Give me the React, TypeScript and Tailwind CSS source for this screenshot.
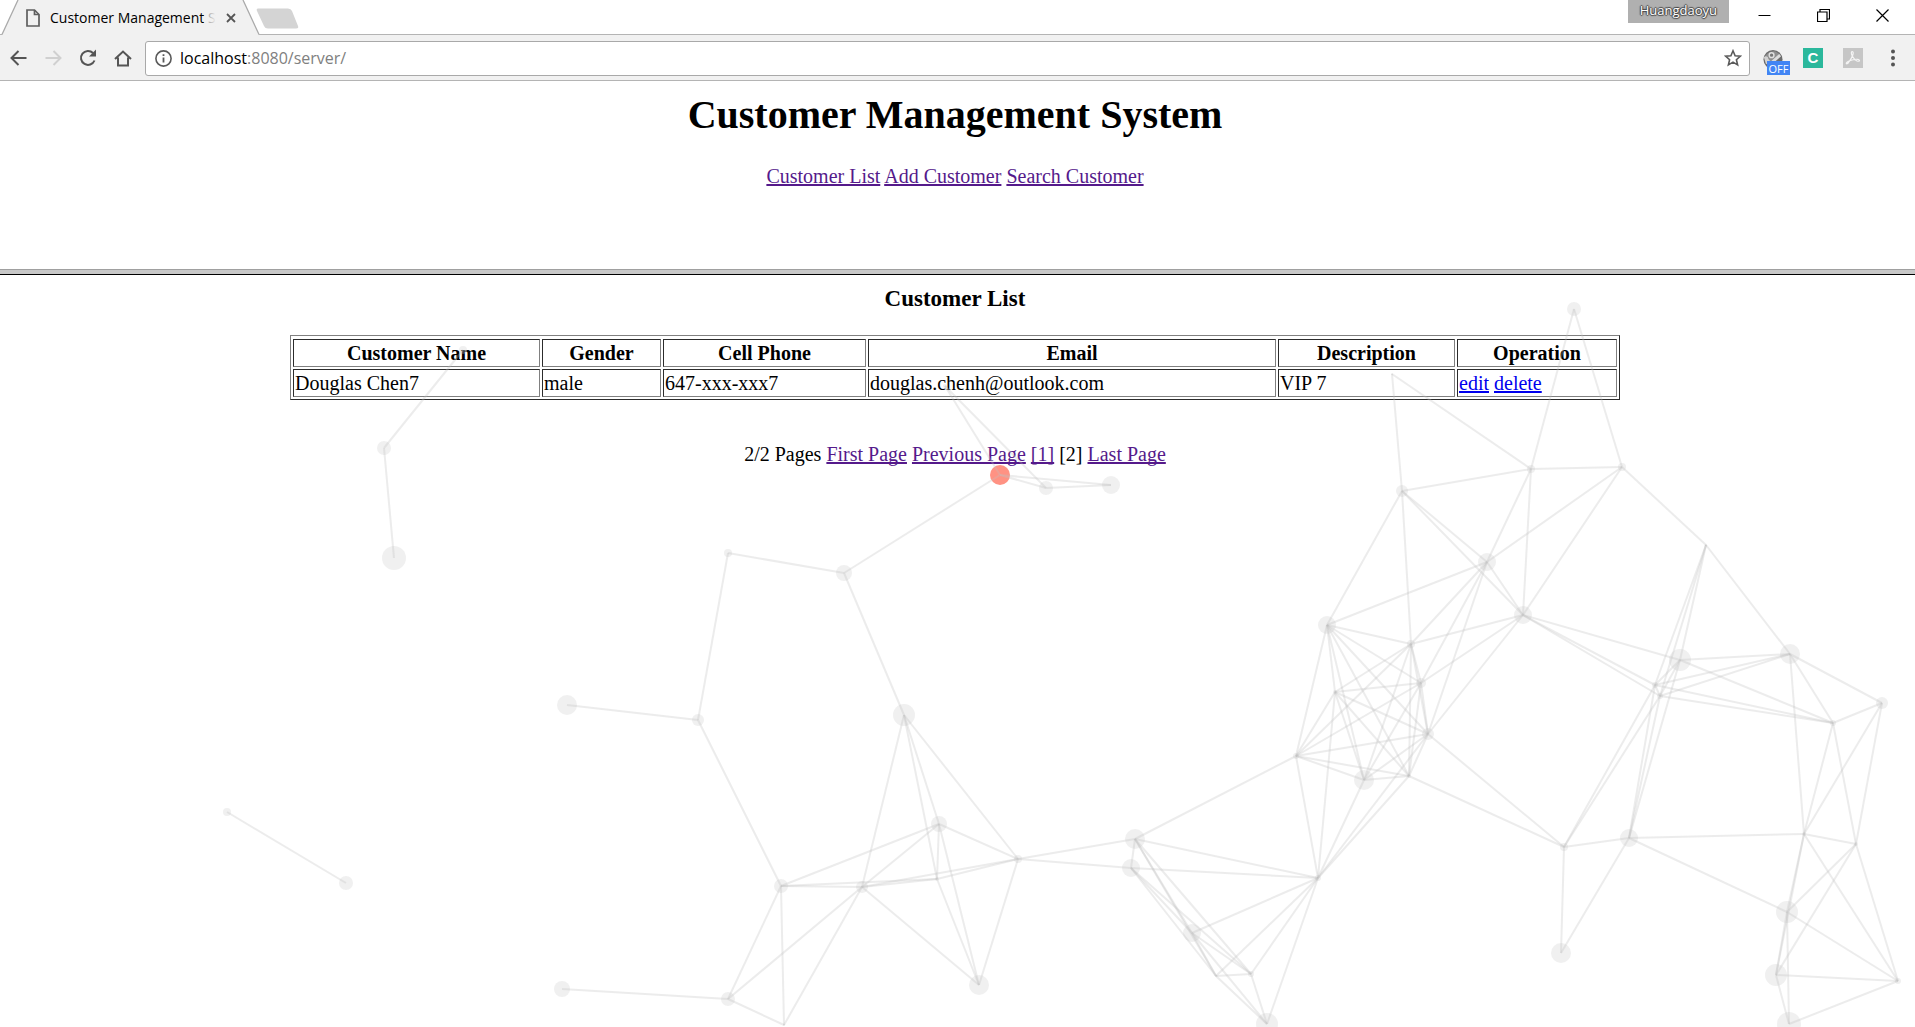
import React from "react";

type Node = [x: number, y: number, r: number];

const nodes: Record<string, Node> = {
  a1: [463, 350, 4], a2: [384, 448, 7], a3: [394, 558, 12],
  b1: [227, 812, 4], b2: [346, 883, 7],
  c1: [728, 553, 4], c2: [844, 573, 8], c3: [567, 705, 10], c4: [698, 720, 6],
  c5: [781, 886, 7], c6: [728, 999, 7], c7: [562, 989, 8], c8: [784, 1025, 1],
  d1: [945, 386, 2], d3: [1046, 488, 7], d4: [1111, 485, 9],
  e1: [904, 715, 11], e2: [939, 824, 8], e3: [1018, 859, 4], e4: [862, 887, 6],
  e5: [937, 879, 2], e6: [979, 985, 10],
  f1: [1135, 839, 10], f2: [1131, 868, 9], f3: [1192, 933, 9], f4: [1216, 976, 1],
  f5: [1251, 974, 3], f6: [1318, 878, 3], f7: [1267, 1024, 11],
  g1: [1327, 625, 9], g2: [1411, 644, 4], g3: [1421, 683, 5], g4: [1335, 692, 2],
  g5: [1428, 734, 6], g6: [1296, 756, 3], g7: [1364, 780, 10], g8: [1409, 776, 2],
  h1: [1392, 374, 1], h2: [1574, 309, 7], h3: [1531, 469, 4], h4: [1622, 467, 4],
  h5: [1402, 491, 6], h6: [1487, 562, 9], h7: [1523, 615, 9],
  i1: [1706, 545, 1], i2: [1680, 660, 11], i3: [1790, 654, 10], i4: [1655, 685, 3],
  i5: [1660, 696, 3], i6: [1833, 723, 3], i7: [1882, 703, 6],
  j1: [1564, 847, 4], j2: [1629, 838, 9], j3: [1561, 953, 10], j4: [1804, 834, 2],
  j5: [1856, 844, 2], j6: [1787, 912, 11], j7: [1776, 975, 11], j8: [1789, 1024, 12],
  j9: [1898, 981, 3],
};

const hot: Node = [1000, 475, 10];

const links: Record<string, string> = {
  a2: "a1 a3", b1: "b2", c1: "c2 c4", c2: "hot e1", c3: "c4", c4: "c5",
  c5: "c6 c8 e2 e4 e5", c6: "c7 c8 e4", c8: "e4",
  d1: "hot d3", d3: "hot d4", d4: "hot",
  e4: "e1 e2 e5 e3 e6", e1: "e5 e2 e3", e2: "e3 e5 e6", e5: "e3 e6", e3: "e6 f1 f2",
  f1: "f2 g6 f6 f3 f4 f5", f2: "f6 f3 f4 f5", f3: "f4 f5 f6 f7", f4: "f5 f6 f7",
  f5: "f6 f7", f6: "f7 g6 g4 g7 g8 g5",
  g1: "g2 g3 g4 g5 g6 g7 g8", g2: "g3 g4 g5 g6 g7 g8", g3: "g4 g5 g6 g7 g8",
  g4: "g5 g6 g7 g8", g5: "g6 g7 g8", g6: "g7 g8", g7: "g8",
  h6: "g1 g2 g3 g5 h7", h7: "g2 g3 g5 i2 i4 i5", h5: "g1 g2 h6 h7 h3 h1",
  h3: "h1 h2 h4 h6 h7", h4: "h2 h6 h7 i1",
  i1: "i2 i4 i5 i3", i2: "i3 i4 i5 i6", i3: "i4 i5 i6 i7 j4", i4: "i5 i6", i5: "i6",
  i6: "i7 j4 j5", i7: "j4 j5",
  j1: "g5 g8 i4 i5 j2 j3", j2: "i4 i5 i2 j3 j4 j6", j4: "j5 j6 j7 j9",
  j5: "j6 j7 j9", j6: "j7 j8 j9", j7: "j9 j8", j8: "j9",
};

function Network() {
  const at = (id: string) => (id === "hot" ? hot : nodes[id]);
  return (
    <svg
      aria-hidden="true"
      className="pointer-events-none absolute inset-0 h-full w-full"
      viewBox="0 275 1915 752"
      preserveAspectRatio="xMidYMin slice"
    >
      {Object.entries(nodes).map(([id, [x, y, r]]) => (
        <circle key={id} cx={x} cy={y} r={r} fill="#ccc" fillOpacity="0.3" />
      ))}
      <circle cx={hot[0]} cy={hot[1]} r={hot[2]} fill="#ff9283" />
      {Object.entries(links).flatMap(([from, list]) =>
        list.split(" ").map((to) => (
          <line
            key={from + to}
            x1={at(from)[0]}
            y1={at(from)[1]}
            x2={at(to)[0]}
            y2={at(to)[1]}
            stroke="#c0c0c0"
            strokeOpacity="0.3"
            strokeWidth="2"
          />
        )),
      )}
    </svg>
  );
}

const iconButton = "flex h-6 w-6 shrink-0 items-center justify-center";

function TabStrip() {
  return (
    <div className="relative flex h-[35px] items-end justify-between bg-white">
      <div className="absolute inset-x-0 bottom-0 h-px bg-[#b4b4b4]" />
      <div className="relative flex items-end">
        <div className="relative flex h-[35px] w-[260px] items-center pl-[26px]">
          <svg className="absolute inset-0 h-full w-full" viewBox="0 0 260 35" aria-hidden="true">
            <path d="M2 35 L18 0 H243 L259 35Z" fill="#f1f1f1" />
            <path d="M2 34.5 L18 0 M243 0 L259 34.5" fill="none" stroke="#aaa" strokeWidth="1.3" />
          </svg>
          <svg className="relative shrink-0" width="14" height="18" viewBox="0 0 14 18" fill="none" stroke="#5f5f5f" strokeWidth="1.7" aria-hidden="true">
            <path d="M1 1 H8.5 L13 5.5 V17 H1Z" />
            <path d="M8.5 1 V5.5 H13" />
          </svg>
          <div className="relative ml-[10px] w-[166px] overflow-hidden whitespace-nowrap font-['Open_Sans','Noto_Sans',sans-serif] text-[14px] leading-5 text-black">
            Customer Management System
            <div className="absolute inset-y-0 right-0 w-3 bg-linear-to-r from-[#f1f1f1]/50 to-[#f1f1f1]" />
          </div>
          <button aria-label="Close tab" className="relative ml-[10px] shrink-0">
            <svg width="10" height="10" viewBox="0 0 10 10" stroke="#555" strokeWidth="1.8" aria-hidden="true">
              <path d="M1 1 L9 9 M9 1 L1 9" />
            </svg>
          </button>
        </div>
        <button aria-label="New tab" className="relative mb-1.5 -ml-1">
          <svg width="43" height="21" viewBox="0 0 43 21" aria-hidden="true">
            <path d="M2 0.5 H32 Q35 0.5 36 3 L42 18 Q43 20.500 40 20.500 H12 Q9 20.500 8 18 L1 3 Q0 0.500 2 0.500Z" fill="#d4d4d4" />
          </svg>
        </button>
      </div>
      <div className="flex h-full items-start">
        <div className="h-[23px] bg-[#b0b0b0] px-3 font-['Open_Sans','Noto_Sans',sans-serif] text-[13px] leading-5 text-white [text-shadow:1px_0_1px_#444,-1px_0_1px_#444,0_1px_1px_#444,0_-1px_1px_#444]">
          Huangdaoyu
        </div>
        <div className="flex items-center gap-[46px] pt-[9px] pr-[26px] pl-[29px] text-black">
          <button aria-label="Minimize">
            <svg width="13" height="13" viewBox="0 0 13 13" aria-hidden="true">
              <path d="M0.5 6.500 H12.500" stroke="currentColor" />
            </svg>
          </button>
          <button aria-label="Restore">
            <svg width="13" height="13" viewBox="0 0 13 13" fill="none" stroke="currentColor" strokeWidth="1.2" aria-hidden="true">
              <path d="M0.5 3 H10 V12.500 H0.500Z M3 3 V0.500 H12.500 V10 H10" />
            </svg>
          </button>
          <button aria-label="Close">
            <svg width="13" height="13" viewBox="0 0 13 13" stroke="currentColor" strokeWidth="1.2" aria-hidden="true">
              <path d="M0.500 0.500 L12.500 12.500 M12.500 0.500 L0.500 12.500" />
            </svg>
          </button>
        </div>
      </div>
    </div>
  );
}

function Toolbar() {
  return (
    <div className="flex h-[46px] items-center border-b border-[#b4b4b4] bg-[#f1f1f1] pt-px pr-[10px] pl-[6px]">
      <div className="flex items-center gap-[11px]">
        <button aria-label="Back" className={iconButton}>
          <svg width="17" height="16" viewBox="0 0 17 16" fill="none" stroke="#555" strokeWidth="2" aria-hidden="true">
            <path d="M16.500 8 H2 M8.500 1 L1.500 8 L8.500 15" />
          </svg>
        </button>
        <button aria-label="Forward" className={iconButton}>
          <svg width="17" height="16" viewBox="0 0 17 16" fill="none" stroke="#d0d0d0" strokeWidth="2" aria-hidden="true">
            <path d="M0.500 8 H15 M8.500 1 L15.500 8 L8.500 15" />
          </svg>
        </button>
        <button aria-label="Reload" className={iconButton}>
          <svg width="18" height="18" viewBox="0 0 18 18" aria-hidden="true">
            <path d="M15.500 11.500 A7 7 0 1 1 14 4" fill="none" stroke="#555" strokeWidth="2" />
            <path d="M17 0.500 V7.500 H10Z" fill="#555" />
          </svg>
        </button>
        <button aria-label="Home" className={iconButton}>
          <svg width="18" height="17" viewBox="0 0 18 17" fill="none" stroke="#555" strokeWidth="2" aria-hidden="true">
            <path d="M1 9 L9 1.500 L17 9 M4 7.500 V15.500 H14 V7.500" />
          </svg>
        </button>
      </div>
      <div className="ml-[10px] flex h-[35px] min-w-0 flex-1 items-center rounded-[3px] border border-[#a9a9a9] bg-white pr-[7px] pl-[9px]">
        <svg className="shrink-0" width="17" height="17" viewBox="0 0 17 17" fill="none" stroke="#5a5a5a" aria-hidden="true">
          <circle cx="8.500" cy="8.500" r="7.600" strokeWidth="1.600" />
          <path d="M8.500 7.500 V12.500 M8.500 4.300 V6" strokeWidth="1.800" />
        </svg>
        <div className="relative ml-2 flex-1 font-['Open_Sans','Noto_Sans',sans-serif] text-[16px] leading-6">
          <div aria-hidden="true" className="pointer-events-none absolute inset-0 whitespace-nowrap text-[#808080]">
            <span className="text-black">localhost</span>:8080/server/
          </div>
          <input
            aria-label="Address"
            defaultValue="localhost:8080/server/"
            className="block w-full bg-transparent text-transparent caret-black outline-none"
          />
        </div>
        <button aria-label="Bookmark this page" className="shrink-0">
          <svg width="18" height="18" viewBox="0 0 18 18" fill="none" stroke="#5a5a5a" strokeWidth="1.600" aria-hidden="true">
            <path d="M9 1.800 L11.100 6.700 L16.400 7.200 L12.400 10.700 L13.600 15.900 L9 13.100 L4.400 15.900 L5.600 10.700 L1.600 7.200 L6.900 6.700Z" />
          </svg>
        </button>
      </div>
      <div className="ml-3 flex items-center">
        <button aria-label="Proxy off" className="relative mt-1.5 h-[27px] w-7">
          <svg className="absolute top-px left-px" width="20" height="20" viewBox="0 0 21 20" aria-hidden="true">
            <circle cx="10.500" cy="10.500" r="10" fill="#6c6c6c" />
            <path d="M1 9 Q5 1 13 2 L18 5 L9 14 L3 14Z" fill="#8f8f8f" />
            <path d="M1 8 Q3 6 5 8 Q6 13 11 13 L8 17 L3 15Z" fill="#d2d2d2" />
            <circle cx="9" cy="6" r="2.500" fill="#777" stroke="#e0e0e0" strokeWidth="1.500" />
            <path d="M10 13 L18 6" stroke="#ddd" strokeWidth="3" />
          </svg>
          <span className="absolute right-0 bottom-0 h-[14px] w-[23px] bg-[#4285f4] text-center font-['Open_Sans','Noto_Sans',sans-serif] text-[11px] leading-[15px] text-white">
            OFF
          </span>
        </button>
        <button aria-label="C extension" className="ml-[13px] flex h-5 w-5 items-center justify-center bg-[#2bb89c] font-['Liberation_Sans',sans-serif] text-[15px] leading-5 font-bold text-white">
          C
        </button>
        <button aria-label="PDF extension" className="ml-5 h-5 w-5 bg-[#c6c6c6]">
          <svg width="20" height="20" viewBox="0 0 20 20" fill="none" stroke="#f4f4f4" strokeWidth="1.200" aria-hidden="true">
            <path d="M9 3.500 C11.500 3.500 10 8.500 5.500 14.500 C3 17.500 2 14.500 6 13 C9 11.800 12 11 14.500 11.300 C17.500 11.700 17 14 14 13 C10.500 11.500 7 5 9 3.500Z" />
          </svg>
        </button>
        <button aria-label="Menu" className="ml-[18px] flex h-6 w-6 items-center justify-center">
          <svg width="4" height="18" viewBox="0 0 4 18" fill="#555" aria-hidden="true">
            <circle cx="2" cy="2.500" r="2" />
            <circle cx="2" cy="9" r="2" />
            <circle cx="2" cy="15.500" r="2" />
          </svg>
        </button>
      </div>
    </div>
  );
}

const visited = "text-[#551a8b] underline decoration-2 [text-decoration-skip-ink:none]";
const fresh = "text-[#0000ee] underline decoration-2 [text-decoration-skip-ink:none]";
const cell = "border border-t-[#2c2c2c] border-l-[#2c2c2c] border-r-[#808080] border-b-[#808080] p-px";

const headings = ["Customer Name", "Gender", "Cell Phone", "Email", "Description", "Operation"];

export default function App() {
  return (
    <div className="flex min-h-screen flex-col bg-white">
      <TabStrip />
      <Toolbar />
      <div className="flex flex-1 flex-col font-['Liberation_Serif',serif] text-[20px] leading-6 text-black">
        <header className="h-[188px] pt-[11px] pr-[5px] text-center">
          <h1 className="text-[40px] leading-[46px] font-bold">Customer Management System</h1>
          <nav className="mt-[26px]">
            <a href="#list" className={visited}>Customer List</a>{" "}
            <a href="#add" className={visited}>Add Customer</a>{" "}
            <a href="#search" className={visited}>Search Customer</a>
          </nav>
        </header>
        <div className="h-1.5 border-t border-b border-t-[#a0a0a0] border-b-black bg-[#c8c8c8]" />
        <main className="relative flex-1 pt-[10px] pr-[10px] pl-[5px] text-center">
          <h3 className="text-[23px] leading-7 font-bold">Customer List</h3>
          <table className="mx-auto mt-[22px] w-[70%] table-fixed border-separate border-spacing-[2px] border border-t-[#808080] border-r-[#2c2c2c] border-b-[#2c2c2c] border-l-[#808080] pt-px">
            <colgroup>
              <col className="w-[247px]" />
              <col className="w-[119px]" />
              <col className="w-[203px]" />
              <col className="w-[408px]" />
              <col className="w-[177px]" />
              <col className="w-[160px]" />
            </colgroup>
            <thead>
              <tr>
                {headings.map((h) => (
                  <th key={h} scope="col" className={cell}>{h}</th>
                ))}
              </tr>
            </thead>
            <tbody className="text-left">
              <tr>
                <td className={cell}>Douglas Chen7</td>
                <td className={cell}>male</td>
                <td className={cell}>647-xxx-xxx7</td>
                <td className={cell}>douglas.chenh@outlook.com</td>
                <td className={cell}>VIP 7</td>
                <td className={cell}>
                  <a href="#edit" className={fresh}>edit</a>{" "}
                  <a href="#delete" className={fresh}>delete</a>
                </td>
              </tr>
            </tbody>
          </table>
          <p className="mt-[42px]">
            2/2 Pages <a href="#first" className={visited}>First Page</a>{" "}
            <a href="#previous" className={visited}>Previous Page</a>{" "}
            <a href="#page-1" className={visited}>[1]</a> [2]{" "}
            <a href="#last" className={visited}>Last Page</a>
          </p>
          <Network />
        </main>
      </div>
    </div>
  );
}
